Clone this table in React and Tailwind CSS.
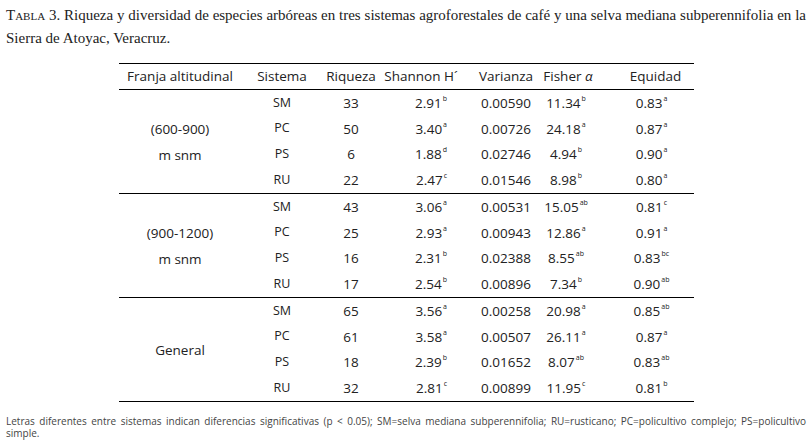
import React from "react";

const groups = [
  {
    label: ["(600-900)", "m snm"],
    rows: [
      ["SM", "33", "2.91", "b", "0.00590", "11.34", "b", "0.83", "a"],
      ["PC", "50", "3.40", "a", "0.00726", "24.18", "a", "0.87", "a"],
      ["PS", "6", "1.88", "d", "0.02746", "4.94", "b", "0.90", "a"],
      ["RU", "22", "2.47", "c", "0.01546", "8.98", "b", "0.80", "a"],
    ],
  },
  {
    label: ["(900-1200)", "m snm"],
    rows: [
      ["SM", "43", "3.06", "a", "0.00531", "15.05", "ab", "0.81", "c"],
      ["PC", "25", "2.93", "a", "0.00943", "12.86", "a", "0.91", "a"],
      ["PS", "16", "2.31", "b", "0.02388", "8.55", "ab", "0.83", "bc"],
      ["RU", "17", "2.54", "b", "0.00896", "7.34", "b", "0.90", "ab"],
    ],
  },
  {
    label: ["General"],
    rows: [
      ["SM", "65", "3.56", "a", "0.00258", "20.98", "a", "0.85", "ab"],
      ["PC", "61", "3.58", "a", "0.00507", "26.11", "a", "0.87", "a"],
      ["PS", "18", "2.39", "b", "0.01652", "8.07", "ab", "0.83", "ab"],
      ["RU", "32", "2.81", "c", "0.00899", "11.95", "c", "0.81", "b"],
    ],
  },
];

const Sup = ({ children }) => (
  <span className="text-[7px] leading-none self-start mt-[2px] ml-[1px]">{children}</span>
);

const cols = "grid grid-cols-[122px_82px_56px_84px_86px_34px_111px]";

export default function App() {
  return (
    <div
      className="w-[812px] h-[441px] bg-white text-[#1e1e1e] overflow-hidden"
      style={{ fontFamily: "'Liberation Serif', serif" }}
    >
      <div className="px-[6px] pt-[4px] text-[15px] leading-[23px] text-[#222]">
        <div className="text-justify [text-align-last:justify] whitespace-nowrap">
          <span className="[font-variant-caps:small-caps]">Tabla</span> 3. Riqueza y diversidad de especies arbóreas en tres sistemas agroforestales de café y una selva mediana subperennifolia en la
        </div>
        <div>Sierra de Atoyac, Veracruz.</div>
      </div>

      <div
        className="ml-[119px] mt-[13px] w-[575px] text-[13.5px] text-[#222]"
        style={{ fontFamily: "'Open Sans', 'Noto Sans', sans-serif" }}
      >
        <div className={`${cols} border-t border-b border-black h-[27px] items-center`}>
          <div className="flex justify-center whitespace-nowrap">Franja altitudinal</div>
          <div className="flex justify-center whitespace-nowrap">Sistema</div>
          <div className="flex justify-center whitespace-nowrap">Riqueza</div>
          <div className="flex justify-center whitespace-nowrap">Shannon H´</div>
          <div className="flex justify-center whitespace-nowrap">Varianza</div>
          <div className="flex justify-center whitespace-nowrap pl-[4px]">
            Fisher&nbsp;<span className="italic">α</span>
          </div>
          <div className="flex justify-center whitespace-nowrap pl-[34px]">Equidad</div>
        </div>

        {groups.map((g, gi) => (
          <div key={gi} className="flex border-b border-black h-[104px]">
            <div className="w-[122px] flex flex-col justify-center items-center leading-[26px]">
              {g.label.map((l) => (
                <div key={l}>{l}</div>
              ))}
            </div>
            <div className="flex-1 flex flex-col">
              {g.rows.map((r, ri) => (
                <div
                  key={ri}
                  className="grid grid-cols-[82px_56px_84px_86px_34px_111px] h-[25.75px] items-center whitespace-nowrap"
                >
                  <div className="flex justify-center text-[12.5px]">{r[0]}</div>
                  <div className="flex justify-center">{r[1]}</div>
                  <div className="flex justify-end pr-[16px]">
                    {r[2]}
                    <Sup>{r[3]}</Sup>
                  </div>
                  <div className="flex justify-center">{r[4]}</div>
                  <div className="flex justify-center">
                    {r[5]}
                    <Sup>{r[6]}</Sup>
                  </div>
                  <div className="flex justify-center pl-[26px]">
                    {r[7]}
                    <Sup>{r[8]}</Sup>
                  </div>
                </div>
              ))}
            </div>
          </div>
        ))}
      </div>

      <div
        className="px-[6px] mt-[13px] text-[10px] leading-[12px] text-[#444]"
        style={{ fontFamily: "'Open Sans', 'Noto Sans', sans-serif" }}
      >
        <div className="text-justify [text-align-last:justify] whitespace-nowrap">
          Letras diferentes entre sistemas indican diferencias significativas (p &lt; 0.05); SM=selva mediana subperennifolia; RU=rusticano; PC=policultivo complejo; PS=policultivo
        </div>
        <div>simple.</div>
      </div>
    </div>
  );
}
